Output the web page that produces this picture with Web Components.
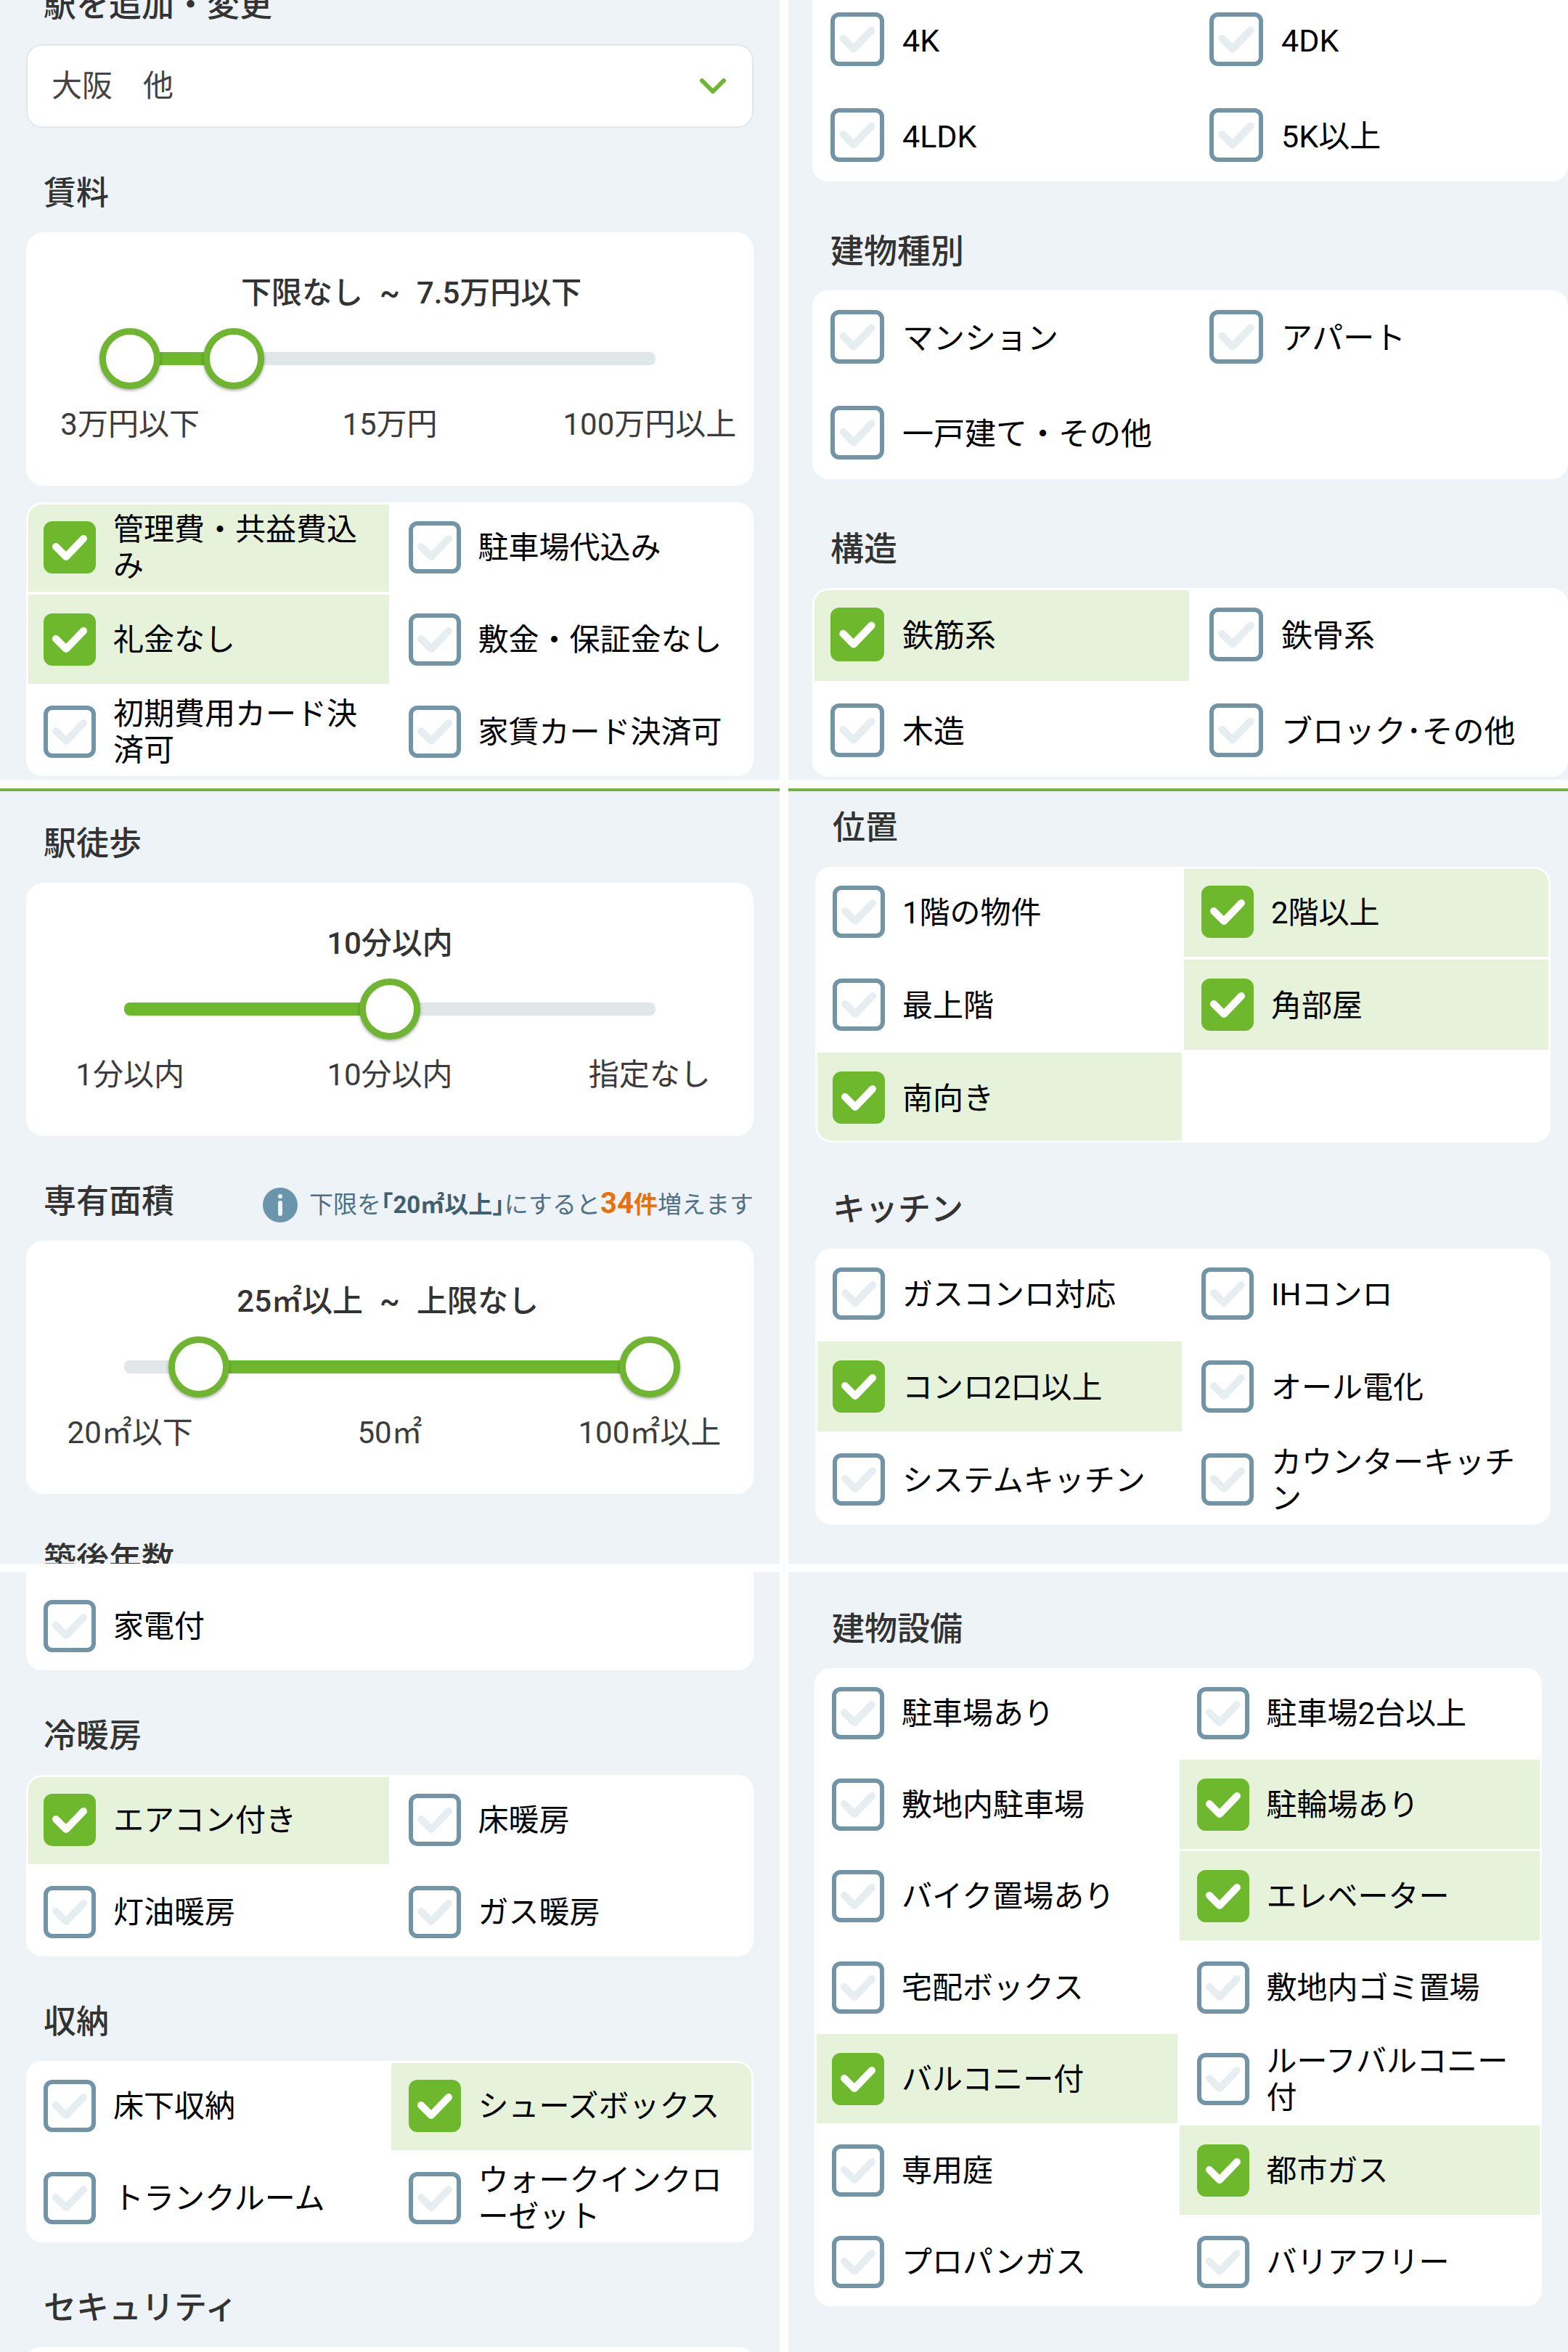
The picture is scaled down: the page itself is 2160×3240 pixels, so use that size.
<!DOCTYPE html>
<html lang="ja">
<head>
<meta charset="utf-8">
<meta name="viewport" content="width=device-width, initial-scale=1">
<title>物件の条件検索</title>
<style>
html, body { margin: 0; height: 100%; }
body {
  background: #fff;
  color: #333;
  font-family: Roboto, "Noto Sans CJK JP", sans-serif;
  font-size: 42px;
  line-height: 62px;
}
</style>
</head>
<body>
<filter-board>
  <filter-pane style="--scrolled:-83px">
    <section-title>駅を追加・変更</section-title>
    <station-select label="駅を追加・変更" value="大阪　他"></station-select>
    <section-title>賃料</section-title>
    <range-card label="賃料" from="下限なし" to="7.5万円以下" low="0" high="200" marks="3万円以下,15万円,100万円以上"></range-card>
    <check-card spaced>
      <check-item checked>管理費・共益費込み</check-item>
      <check-item>駐車場代込み</check-item>
      <check-item checked>礼金なし</check-item>
      <check-item>敷金・保証金なし</check-item>
      <check-item>初期費用カード決済可</check-item>
      <check-item>家賃カード決済可</check-item>
    </check-card>
  </filter-pane>

  <filter-pane class="large" style="--scrolled:-50px">
    <check-card continued>
      <check-item>4K</check-item>
      <check-item>4DK</check-item>
      <check-item>4LDK</check-item>
      <check-item>5K以上</check-item>
    </check-card>
    <section-title>建物種別</section-title>
    <check-card>
      <check-item>マンション</check-item>
      <check-item>アパート</check-item>
      <check-item>一戸建て・その他</check-item>
    </check-card>
    <section-title>構造</section-title>
    <check-card>
      <check-item checked>鉄筋系</check-item>
      <check-item>鉄骨系</check-item>
      <check-item>木造</check-item>
      <check-item>ブロック･その他</check-item>
    </check-card>
  </filter-pane>

  <filter-pane ruled style="--scrolled:-18px">
    <section-title>駅徒歩</section-title>
    <range-card label="駅徒歩" to="10分以内" high="500" marks="1分以内,10分以内,指定なし"></range-card>
    <section-title>専有面積
      <info-note slot="note">下限を<b>｢20㎡以上｣</b>にすると<strong><big>34</big>件</strong>増えます</info-note>
    </section-title>
    <range-card label="専有面積" from="25㎡以上" to="上限なし" low="133" high="1000" marks="20㎡以下,50㎡,100㎡以上"></range-card>
    <section-title>築後年数</section-title>
  </filter-pane>

  <filter-pane class="medium" ruled style="--scrolled:-42px">
    <section-title>位置</section-title>
    <check-card>
      <check-item>1階の物件</check-item>
      <check-item checked>2階以上</check-item>
      <check-item>最上階</check-item>
      <check-item checked>角部屋</check-item>
      <check-item checked>南向き</check-item>
    </check-card>
    <section-title>キッチン</section-title>
    <check-card>
      <check-item>ガスコンロ対応</check-item>
      <check-item>IHコンロ</check-item>
      <check-item checked>コンロ2口以上</check-item>
      <check-item>オール電化</check-item>
      <check-item>システムキッチン</check-item>
      <check-item>カウンターキッチン</check-item>
    </check-card>
  </filter-pane>

  <filter-pane style="--scrolled:-28px">
    <check-card continued>
      <check-item>家電付</check-item>
    </check-card>
    <section-title>冷暖房</section-title>
    <check-card>
      <check-item checked>エアコン付き</check-item>
      <check-item>床暖房</check-item>
      <check-item>灯油暖房</check-item>
      <check-item>ガス暖房</check-item>
    </check-card>
    <section-title>収納</section-title>
    <check-card>
      <check-item>床下収納</check-item>
      <check-item checked>シューズボックス</check-item>
      <check-item>トランクルーム</check-item>
      <check-item>ウォークインクローゼット</check-item>
    </check-card>
    <section-title>セキュリティ</section-title>
    <check-card continued></check-card>
  </filter-pane>

  <filter-pane class="dense" style="--scrolled:-12px">
    <section-title>建物設備</section-title>
    <check-card>
      <check-item>駐車場あり</check-item>
      <check-item>駐車場2台以上</check-item>
      <check-item>敷地内駐車場</check-item>
      <check-item checked>駐輪場あり</check-item>
      <check-item>バイク置場あり</check-item>
      <check-item checked>エレベーター</check-item>
      <check-item>宅配ボックス</check-item>
      <check-item>敷地内ゴミ置場</check-item>
      <check-item checked>バルコニー付</check-item>
      <check-item>ルーフバルコニー付</check-item>
      <check-item>専用庭</check-item>
      <check-item checked>都市ガス</check-item>
      <check-item>プロパンガス</check-item>
      <check-item>バリアフリー</check-item>
    </check-card>
  </filter-pane>
</filter-board>

<script>
class Base extends HTMLElement {
  connectedCallback() {
    if (this.shadowRoot) return;
    this.attachShadow({ mode: 'open' }).innerHTML = this.render();
    this.ready();
  }
  ready() {}
}

/* Grid of phone-sized panes with white gutters */
customElements.define('filter-board', class extends Base {
  render() {
    return `<style>
      :host { display: grid; height: 100vh; gap: 12px;
        grid-template-columns: 1fr 1fr; grid-template-rows: 179fr 178fr 179fr; }
    </style><slot></slot>`;
  }
});

/* One scrolled view of the filter form */
customElements.define('filter-pane', class extends Base {
  render() {
    return `<style>
      :host {
        --row: 123px; --row-gap: 4px; --box: 72px; --inset: 24px; --label: 42px;
        --title: 45px; --title-line: 64px; --title-top: 59px; --title-bottom: 21px;
        display: block; box-sizing: border-box; min-width: 0; min-height: 0;
        overflow: hidden; padding: 0 36px; background: #eef3f7;
      }
      :host(.large) {
        --row: 128px; --box: 74px; --inset: 25px; --label: 43px;
        --title: 46px; --title-line: 66px; --title-top: 63px;
        padding: 0 0 0 33px;
      }
      :host(.medium) { --row: 124px; --title-top: 61px; padding: 0 24px 0 37px; }
      :host(.dense) { --row-gap: 3px; }
      :host([ruled]) { border-top: 4px solid #74b244; }
      main { display: flow-root; margin-top: var(--scrolled, 0px); }
    </style><main><slot></slot></main>`;
  }
});

customElements.define('section-title', class extends Base {
  render() {
    return `<style>
      :host { display: flex; justify-content: space-between; align-items: flex-end;
        padding: var(--title-top) 0 var(--title-bottom) var(--inset); }
      h2 { margin: 0; font-size: var(--title); line-height: var(--title-line); font-weight: 500; white-space: nowrap; }
    </style><h2><slot></slot></h2><slot name="note"></slot>`;
  }
});

customElements.define('info-note', class extends Base {
  render() {
    return `<style>
      :host { display: flex; align-items: center; gap: 16px; color: #4f7183; font-size: 33px; line-height: 56px; white-space: nowrap; }
      svg { width: 48px; height: 48px; flex: none; }
      ::slotted(b) { font-weight: 700; color: #41606f; }
      ::slotted(strong) { font-weight: 700; color: #e8710f; }
    </style>
    <svg viewBox="0 0 48 48" aria-hidden="true"><circle cx="24" cy="24" r="24" fill="#6b95aa"/><circle cx="24" cy="12" r="3" fill="#eef3f7"/><path d="M24 21v15" stroke="#eef3f7" stroke-width="6" stroke-linecap="round"/></svg>
    <span><slot></slot></span>`;
  }
  ready() {
    this.querySelector('big').style.cssText = 'font-size: 40px; line-height: 48px';
  }
});

customElements.define('station-select', class extends Base {
  render() {
    return `<style>
      :host { display: grid; align-items: center; }
      select, svg { grid-area: 1 / 1; }
      select { appearance: none; box-sizing: border-box; width: 100%; height: 115px; padding: 0 96px 0 33px;
        border: 2px solid #e1e7ea; border-radius: 22px; background: #fff; color: #444;
        font: inherit; font-size: 42px; }
      svg { width: 40px; height: 26px; justify-self: end; margin-right: 36px; pointer-events: none; }
    </style>
    <select aria-label="${this.getAttribute('label')}"><option>${this.getAttribute('value')}</option></select>
    <svg viewBox="0 0 40 26" fill="none" stroke="#6fb536" stroke-width="6" stroke-linecap="round" stroke-linejoin="round" aria-hidden="true"><path d="M5 5l15 15L35 5"/></svg>`;
  }
});

/* Slider with one or two thumbs; values run from 0 to 1000 */
customElements.define('range-card', class extends Base {
  render() {
    const a = n => this.getAttribute(n);
    const dual = this.hasAttribute('low');
    const input = (value, name) =>
      `<input type="range" min="0" max="1000" value="${value}" aria-label="${a('label')} ${name}">`;
    return `<style>
      :host { display: block; padding: 53px 0; background: #fff; border-radius: 24px; }
      .value { display: grid; grid-template-columns: 1fr auto 1fr; gap: 23px; font-weight: 500; }
      .value.single { display: block; text-align: center; }
      .value span:first-child { text-align: right; }
      .slider { display: grid; align-items: center; margin: 17px 101px 18px; }
      .slider > * { grid-area: 1 / 1; }
      .track { display: flex; height: 18px; margin: 0 34px; border-radius: 8px; background: #e1e6e9; overflow: hidden; }
      .fill { background: #6db82c; margin-left: ${dual ? a('low') / 10 : 0}%; width: ${(a('high') - (a('low') || 0)) / 10}%; }
      input { appearance: none; width: 100%; height: 84px; margin: 0; background: none; pointer-events: none; }
      input::-webkit-slider-thumb { appearance: none; box-sizing: border-box; width: 84px; height: 84px;
        border: 9px solid #70b532; border-radius: 50%; background: #fff;
        box-shadow: 0 2px 4px rgba(0, 0, 0, .35); pointer-events: auto; }
      .marks { display: grid; grid-template-columns: 2fr 3fr 2fr; text-align: center; white-space: nowrap; color: #3c3c3c; }
    </style>
    ${dual
      ? `<div class="value"><span>${a('from')}</span><span>~</span><span>${a('to')}</span></div>`
      : `<div class="value single">${a('to')}</div>`}
    <div class="slider"><div class="track"><div class="fill"></div></div>
      ${dual ? input(a('low'), '下限') : ''}${input(a('high'), '上限')}</div>
    <div class="marks">${a('marks').split(',').map(m => `<span>${m}</span>`).join('')}</div>`;
  }
});

customElements.define('check-card', class extends Base {
  render() {
    return `<style>
      :host { display: grid; grid-template-columns: 1fr 1fr; grid-auto-rows: minmax(var(--row), auto);
        gap: var(--row-gap) 3px; position: relative; overflow: hidden; background: #fff; border-radius: 22px; }
      :host([spaced]) { margin-top: 23px; }
      :host([continued]) { padding-top: 40px; }
      /* white rim drawn over the tinted cells */
      :host::after { content: ""; position: absolute; inset: 0; border: 3px solid #fff; border-radius: inherit; pointer-events: none; }
    </style><slot></slot>`;
  }
});

customElements.define('check-item', class extends Base {
  render() {
    return `<style>
      :host { display: block; min-width: 0; color: #000; font-size: var(--label); line-height: 50px; }
      :host([checked]) { background: #e6f2da; }
      label { display: flex; align-items: center; gap: var(--inset); height: 100%; box-sizing: border-box; padding: 0 22px 0 var(--inset); }
      .text { padding-top: 3px; }
      .box { display: grid; flex: none; width: var(--box); height: var(--box); }
      .box > * { grid-area: 1 / 1; width: 100%; height: 100%; }
      input { appearance: none; box-sizing: border-box; margin: 0; border: 6px solid #7195a7; border-radius: 12px; background: #fff; }
      input:checked { border-color: #6db82c; background: #6db82c; }
      svg { color: #e7eef2; pointer-events: none; }
      input:checked + svg { color: #fff; }
    </style>
    <label><span class="box"><input type="checkbox"${this.hasAttribute('checked') ? ' checked' : ''}><svg viewBox="0 0 72 72" fill="none" stroke="currentColor" stroke-width="10" stroke-linecap="round" stroke-linejoin="round" aria-hidden="true"><path d="M17 35l14 14 24-25"/></svg></span><span class="text"><slot></slot></span></label>`;
  }
  ready() {
    this.shadowRoot.querySelector('input').addEventListener('change', e =>
      this.toggleAttribute('checked', e.target.checked));
  }
});
</script>
</body>
</html>
